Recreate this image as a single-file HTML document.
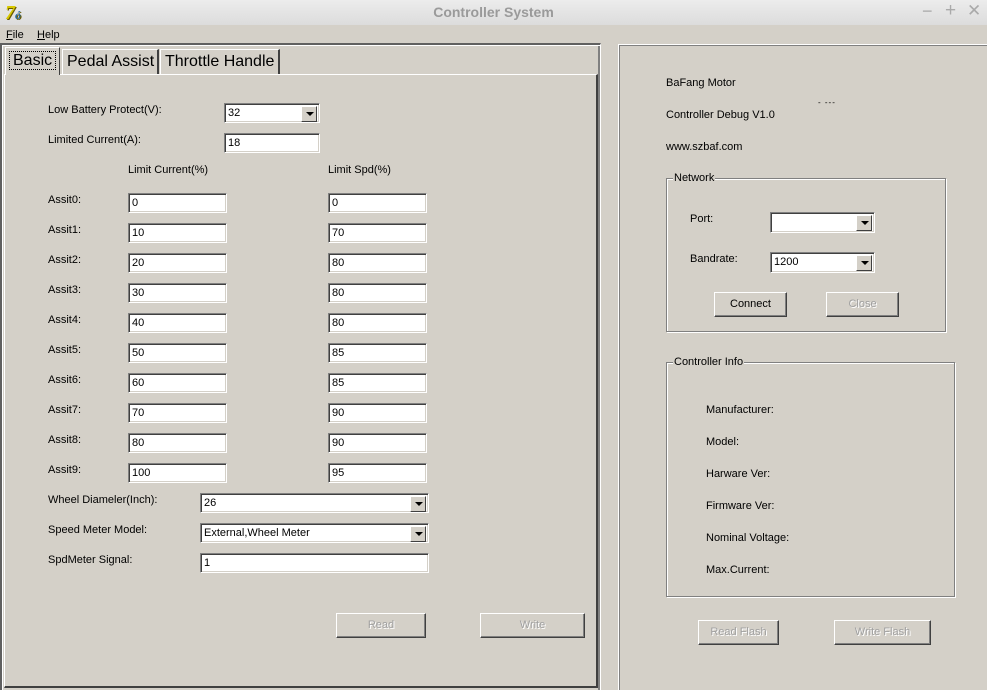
<!DOCTYPE html>
<html><head><meta charset="utf-8"><style>
*{box-sizing:border-box;margin:0;padding:0}
body{width:987px;height:690px;overflow:hidden;background:#d4d0c8;font-family:"Liberation Sans",sans-serif;font-size:11px;color:#000;position:relative}
.a{position:absolute;white-space:nowrap}
.in{position:absolute;background:#fff;border-top:1px solid #808080;border-left:1px solid #808080;border-bottom:1px solid #fff;border-right:1px solid #fff;box-shadow:inset 1px 1px 0 #404040,inset -1px -1px 0 #d4d0c8;padding:3px 0 0 3px;font-size:11px;height:20px}
.dd{position:absolute;right:2px;top:2px;width:16px;height:16px;background:#d4d0c8;border-top:1px solid #fff;border-left:1px solid #fff;border-right:1px solid #404040;border-bottom:1px solid #404040}
.dd:after{content:"";position:absolute;left:4px;top:5px;border-left:4px solid transparent;border-right:4px solid transparent;border-top:4px solid #000}
.btn{position:absolute;height:25px;border-top:1px solid #fff;border-left:1px solid #fff;border-right:1px solid #404040;border-bottom:1px solid #404040;box-shadow:inset -1px -1px 0 #808080;text-align:center;line-height:22px;font-size:11px}
.dis{color:#a0a0a0;text-shadow:1px 1px 0 #fff}
.grp{position:absolute;border:1px solid #808080;box-shadow:inset 1px 1px 0 #fff,1px 1px 0 #fff}
.grp span{position:absolute;top:-7px;left:6px;background:#d4d0c8;padding:0 1px}
</style></head><body>
<div class="a" style="left:0;top:0;width:987px;height:25px;background:linear-gradient(#ececec,#dcdcdc)"></div>
<div class="a" style="left:5px;top:2px;font:bold italic 20px 'Liberation Serif',serif;color:#d8c800;text-shadow:1px 1px 0 #6a5a00">7<span style="font-size:12px;color:#2a6a9a">ó</span></div>
<div class="a" style="left:0;width:987px;top:4px;text-align:center;font-weight:bold;font-size:14px;color:#9a9a9a">Controller System</div>
<div class="a" style="left:922px;top:1px;font-size:18px;color:#aaa">−</div>
<div class="a" style="left:945px;top:0px;font-size:19px;color:#aaa">+</div>
<div class="a" style="left:967px;top:1px;font-size:17px;color:#aaa">✕</div>
<div class="a" style="left:6px;top:29px"><u>F</u>ile</div>
<div class="a" style="left:37px;top:29px"><u>H</u>elp</div>

<div class="a" style="left:0;top:43px;width:601px;height:647px;border-top:2px solid #606060;border-left:2px solid #606060;border-right:1px solid #fff;box-shadow:inset 1px 1px 0 #fff,inset -2px 0 0 #808080"></div>
<div class="a" style="left:4px;top:74px;width:594px;height:614px;border-top:1px solid #fff;border-left:1px solid #fff;border-right:2px solid #404040;border-bottom:2px solid #404040"></div>
<div class="a" style="left:5px;top:47px;width:55px;height:28px;background:#d4d0c8;border-top:1px solid #fff;border-left:1px solid #fff;border-right:1px solid #404040;font-size:16px;padding:4px 0 0 3px"><span style="border:1px dotted #000;padding:0 3px">Basic</span></div>
<div class="a" style="left:62px;top:49px;width:97px;height:25px;border-top:1px solid #fff;border-left:1px solid #fff;border-right:2px solid #404040;font-size:16px;padding:3px 0 0 4px">Pedal Assist</div>
<div class="a" style="left:160px;top:49px;width:120px;height:25px;border-top:1px solid #fff;border-left:1px solid #fff;border-right:2px solid #404040;font-size:16px;padding:3px 0 0 4px">Throttle Handle</div>

<div class="a" style="left:48px;top:104px">Low Battery Protect(V):</div>
<div class="in" style="left:224px;top:103px;width:96px">32<div class="dd"></div></div>
<div class="a" style="left:48px;top:134px">Limited Current(A):</div>
<div class="in" style="left:224px;top:133px;width:96px">18</div>
<div class="a" style="left:128px;top:164px">Limit Current(%)</div>
<div class="a" style="left:328px;top:164px">Limit Spd(%)</div>

<div class="a" style="left:48px;top:194px">Assit0:</div><div class="in" style="left:128px;top:193px;width:99px">0</div><div class="in" style="left:328px;top:193px;width:99px">0</div>
<div class="a" style="left:48px;top:224px">Assit1:</div><div class="in" style="left:128px;top:223px;width:99px">10</div><div class="in" style="left:328px;top:223px;width:99px">70</div>
<div class="a" style="left:48px;top:254px">Assit2:</div><div class="in" style="left:128px;top:253px;width:99px">20</div><div class="in" style="left:328px;top:253px;width:99px">80</div>
<div class="a" style="left:48px;top:284px">Assit3:</div><div class="in" style="left:128px;top:283px;width:99px">30</div><div class="in" style="left:328px;top:283px;width:99px">80</div>
<div class="a" style="left:48px;top:314px">Assit4:</div><div class="in" style="left:128px;top:313px;width:99px">40</div><div class="in" style="left:328px;top:313px;width:99px">80</div>
<div class="a" style="left:48px;top:344px">Assit5:</div><div class="in" style="left:128px;top:343px;width:99px">50</div><div class="in" style="left:328px;top:343px;width:99px">85</div>
<div class="a" style="left:48px;top:374px">Assit6:</div><div class="in" style="left:128px;top:373px;width:99px">60</div><div class="in" style="left:328px;top:373px;width:99px">85</div>
<div class="a" style="left:48px;top:404px">Assit7:</div><div class="in" style="left:128px;top:403px;width:99px">70</div><div class="in" style="left:328px;top:403px;width:99px">90</div>
<div class="a" style="left:48px;top:434px">Assit8:</div><div class="in" style="left:128px;top:433px;width:99px">80</div><div class="in" style="left:328px;top:433px;width:99px">90</div>
<div class="a" style="left:48px;top:464px">Assit9:</div><div class="in" style="left:128px;top:463px;width:99px">100</div><div class="in" style="left:328px;top:463px;width:99px">95</div>

<div class="a" style="left:48px;top:494px">Wheel Diameler(Inch):</div>
<div class="in" style="left:200px;top:493px;width:229px">26<div class="dd"></div></div>
<div class="a" style="left:48px;top:524px">Speed Meter Model:</div>
<div class="in" style="left:200px;top:523px;width:229px">External,Wheel Meter<div class="dd"></div></div>
<div class="a" style="left:48px;top:554px">SpdMeter Signal:</div>
<div class="in" style="left:200px;top:553px;width:229px">1</div>
<div class="btn dis" style="left:336px;top:613px;width:90px">Read</div>
<div class="btn dis" style="left:480px;top:613px;width:105px">Write</div>

<div class="a" style="left:618px;top:44px;width:369px;height:646px;border-top:1px solid #fff;border-left:1px solid #fff;box-shadow:inset 1px 1px 0 #808080"></div>
<div class="a" style="left:666px;top:77px">BaFang Motor</div>
<div class="a" style="left:666px;top:109px">Controller Debug V1.0</div>
<div class="a" style="left:818px;top:98px;font-size:8px;letter-spacing:1px">- ---</div>
<div class="a" style="left:666px;top:141px">www.szbaf.com</div>
<div class="grp" style="left:666px;top:178px;width:280px;height:154px"><span>Network</span></div>
<div class="a" style="left:690px;top:213px">Port:</div>
<div class="in" style="left:770px;top:212px;width:105px;height:21px"><div class="dd"></div></div>
<div class="a" style="left:690px;top:253px">Bandrate:</div>
<div class="in" style="left:770px;top:252px;width:105px;height:21px">1200<div class="dd"></div></div>
<div class="btn" style="left:714px;top:292px;width:73px">Connect</div>
<div class="btn dis" style="left:826px;top:292px;width:73px">Close</div>
<div class="grp" style="left:666px;top:362px;width:289px;height:235px"><span>Controller Info</span></div>
<div class="a" style="left:706px;top:404px">Manufacturer:</div>
<div class="a" style="left:706px;top:436px">Model:</div>
<div class="a" style="left:706px;top:468px">Harware Ver:</div>
<div class="a" style="left:706px;top:500px">Firmware Ver:</div>
<div class="a" style="left:706px;top:532px">Nominal Voltage:</div>
<div class="a" style="left:706px;top:564px">Max.Current:</div>
<div class="btn dis" style="left:698px;top:620px;width:81px">Read Flash</div>
<div class="btn dis" style="left:834px;top:620px;width:97px">Write Flash</div>
</body></html>
